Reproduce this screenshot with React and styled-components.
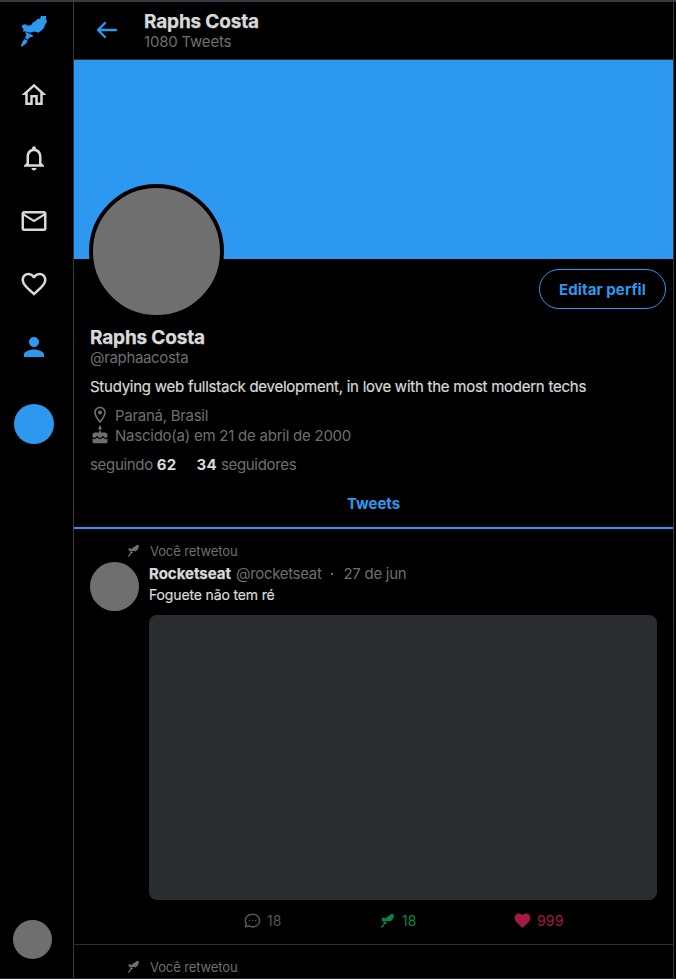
import React from 'react';
import styled, { createGlobalStyle } from 'styled-components';
import {
  MdOutlineHome,
  MdNotificationsNone,
  MdMailOutline,
  MdFavoriteBorder,
  MdFavorite,
  MdPerson,
  MdOutlineLocationOn,
  MdCake,
} from 'react-icons/md';
import { HiOutlineArrowLeft, HiOutlineChat } from 'react-icons/hi';

const c = {
  blue: '#2c98f0',
  white: '#d9d9d9',
  gray: '#6f6f6f',
  line: '#2c2e30',
  media: '#2a2d30',
  green: '#078646',
  red: '#a41b40',
};

const GlobalStyle = createGlobalStyle`
  * { box-sizing: border-box; margin: 0; padding: 0; }
  html, body { background: #000; overflow: hidden; }
  body { color: ${c.white}; font: 400 15px/20px "Inter", sans-serif; }
  svg { display: block; flex-shrink: 0; }
`;

const Page = styled.div`
  display: flex;
  height: 979px;
  overflow: hidden;
  border-top: 2px solid #373946;
  border-bottom: 1px solid #242628;
`;

const Sidebar = styled.nav`
  display: flex;
  flex-direction: column;
  justify-content: space-between;
  width: 74px;
  padding: 14px 0 19px 13px;
  border-right: 1px solid #36383a;
`;

const Menu = styled.div`
  display: flex;
  flex-direction: column;
  align-items: center;
  width: 42px;
`;

const Logo = styled.div`
  height: 32px;
  margin-bottom: 32px;
  color: ${c.blue};
`;

const MenuItem = styled.a`
  margin-bottom: 33px;
  color: ${(p) => (p.$active ? c.blue : c.white)};
  svg { width: 30px; height: 30px; }
`;

const TweetButton = styled.button`
  width: 40px;
  height: 40px;
  margin-top: 9px;
  border: 0;
  border-radius: 50%;
  background: ${c.blue};
`;

const UserPhoto = styled.div`
  width: 39px;
  height: 39px;
  border-radius: 50%;
  background: ${c.gray};
`;

const Main = styled.main`
  display: flex;
  flex-direction: column;
  width: 600px;
  border-right: 1px solid #36383a;
`;

const Header = styled.header`
  display: flex;
  flex: 0 0 58px;
  padding: 8px 0 0 21px;
  border-bottom: 1px solid ${c.line};
`;

const Back = styled.button`
  width: 24px;
  height: 24px;
  margin: 8px 25px 0 0;
  border: 0;
  background: none;
  color: ${c.blue};
  path { stroke-width: 2.3px; }
`;

const Name = styled.h1`
  font-size: 19px;
  font-weight: 700;
  line-height: 23px;
  letter-spacing: -0.17px;
  -webkit-text-stroke: 0.25px currentColor;
`;

const Muted = styled.span`
  display: block;
  color: ${c.gray};
  font-size: ${(p) => p.$size || 15}px;
  line-height: 18px;
  letter-spacing: ${(p) => p.$track ?? -0.2}px;
`;

const Banner = styled.div`
  position: relative;
  flex: 0 0 199px;
  background: ${c.blue};
`;

const Avatar = styled.div`
  position: absolute;
  left: 15px;
  top: 124px;
  width: 135px;
  height: 135px;
  border: 4px solid #000;
  border-radius: 50%;
  background: ${c.gray};
`;

const Profile = styled.section`
  display: flex;
  flex: 0 0 270px;
  flex-direction: column;
  padding: 10px 7px 0 16px;
  border-bottom: 2px solid ${c.blue};
`;

const EditButton = styled.button`
  align-self: flex-end;
  width: 127px;
  height: 40px;
  margin-bottom: 17px;
  padding-top: 2px;
  border: 1px solid ${c.blue};
  border-radius: 20px;
  background: none;
  color: ${c.blue};
  font: 700 15px/20px "Inter", sans-serif;
  letter-spacing: 0.1px;
`;

const Bio = styled.p`
  margin: 10px 0 8px;
  letter-spacing: -0.25px;
  -webkit-text-stroke: 0.2px currentColor;
`;

const Detail = styled.div`
  display: flex;
  align-items: center;
  gap: 5px;
  height: 20px;
  color: ${c.gray};
  svg { width: 20px; height: 20px; }
  ${Muted} { padding-top: 2px; }
`;

const Follows = styled.div`
  display: flex;
  gap: 20px;
  margin-top: 11px;
  color: ${c.gray};
  line-height: 18px;
  letter-spacing: -0.32px;
  strong { color: ${c.white}; font-weight: 700; letter-spacing: 0.3px; }
`;

const Tab = styled.div`
  margin-top: 18px;
  padding-right: 9px;
  color: ${c.blue};
  font-weight: 700;
  line-height: 24px;
  text-align: center;
  letter-spacing: -0.05px;
`;

const Tweet = styled.article`
  flex: 0 0 416px;
  padding: 14px 16px 0;
  border-bottom: 1px solid ${c.line};
`;

const Retweeted = styled.div`
  display: flex;
  gap: 11px;
  height: 18px;
  padding-left: 38px;
  color: ${c.gray};
  svg { margin-top: 2px; }
  ${Muted} { line-height: 17px; }
`;

const Body = styled.div`
  display: grid;
  grid-template-columns: 49px 508px;
  gap: 10px;
  margin-top: 1px;
`;

const Photo = styled.div`
  width: 49px;
  height: 49px;
  border-radius: 50%;
  background: ${c.gray};
`;

const Content = styled.div`
  display: flex;
  flex-direction: column;
`;

const Author = styled.div`
  display: flex;
  height: 23px;
  padding-top: 1px;
  align-items: center;
  gap: 6px;
  white-space: nowrap;
  strong {
    width: 81px;
    font-weight: 700;
    letter-spacing: -0.02px;
    -webkit-text-stroke: 0.25px currentColor;
  }
`;

const Dot = styled.i`
  width: 2px;
  height: 2px;
  margin: 0 4px;
  background: ${c.gray};
`;

const Text = styled.p`
  height: 20px;
  font-size: 14px;
  letter-spacing: -0.14px;
  -webkit-text-stroke: 0.2px currentColor;
`;

const Media = styled.div`
  height: 285px;
  margin-top: 10px;
  border-radius: 8px;
  background: ${c.media};
`;

const Actions = styled.div`
  display: grid;
  grid-template-columns: 138px 132px auto;
  margin-top: 11px;
  padding-left: 94px;
`;

const Action = styled.div`
  display: flex;
  align-items: center;
  gap: ${(p) => p.$gap || 5}px;
  height: 19px;
  color: ${(p) => p.$color};
  font-size: 14px;
  letter-spacing: 0.15px;
  svg.glyph { width: 19px; height: 19px; }
`;

function Rocket({ width, height }) {
  return (
    <svg width={width} height={height} viewBox="63 48 78 93" preserveAspectRatio="none" fill="currentColor">
      <path d="M123 48H139L138 56L141 65L135 74L132 84L125 91L116 98L108 95L99 95L90 98L80 95L68 94L71 88L65 81L68 74L76 73L84 77L94 75L98 68L107 63L112 57L120 56Z" />
      <path d="M76 95L86 100L100 107L97 111L89 112L83 119L75 114L79 106Z" />
      <path d="M73 117L83 122L79 130L65 141L63 136L67 127Z" />
    </svg>
  );
}

function TweetItem({ children }) {
  return (
    <Tweet>
      <Retweeted>
        <Rocket width={11} height={12} />
        <Muted $size={13} $track={-0.12}>Você retwetou</Muted>
      </Retweeted>
      <Body>
        <Photo />
        <Content>{children}</Content>
      </Body>
    </Tweet>
  );
}

export default function App() {
  return (
    <>
      <GlobalStyle />
      <Page>
        <Sidebar>
          <Menu>
            <Logo><Rocket width={26} height={31} /></Logo>
            <MenuItem><MdOutlineHome /></MenuItem>
            <MenuItem><MdNotificationsNone /></MenuItem>
            <MenuItem><MdMailOutline /></MenuItem>
            <MenuItem><MdFavoriteBorder /></MenuItem>
            <MenuItem $active><MdPerson /></MenuItem>
            <TweetButton />
          </Menu>
          <UserPhoto />
        </Sidebar>
        <Main>
          <Header>
            <Back><HiOutlineArrowLeft size={24} /></Back>
            <div>
              <Name>Raphs Costa</Name>
              <Muted $track={-0.2}>1080 Tweets</Muted>
            </div>
          </Header>
          <Banner><Avatar /></Banner>
          <Profile>
            <EditButton>Editar perfil</EditButton>
            <Name>Raphs Costa</Name>
            <Muted $track={-0.34}>@raphaacosta</Muted>
            <Bio>Studying web fullstack development, in love with the most modern techs</Bio>
            <Detail><MdOutlineLocationOn /><Muted $track={-0.28}>Paraná, Brasil</Muted></Detail>
            <Detail><MdCake /><Muted $track={-0.24}>Nascido(a) em 21 de abril de 2000</Muted></Detail>
            <Follows>
              <span>seguindo <strong>62</strong></span>
              <span><strong>34</strong> seguidores</span>
            </Follows>
            <Tab>Tweets</Tab>
          </Profile>
          <TweetItem>
            <Author>
              <strong>Rocketseat</strong>
              <Muted $track={-0.32}>@rocketseat</Muted>
              <Dot />
              <Muted $track={-0.28}>27 de jun</Muted>
            </Author>
            <Text>Foguete não tem ré</Text>
            <Media />
            <Actions>
              <Action $color="#555"><HiOutlineChat className="glyph" />18</Action>
              <Action $color={c.green} $gap={8}><Rocket width={13} height={14} />18</Action>
              <Action $color={c.red}><MdFavorite className="glyph" />999</Action>
            </Actions>
          </TweetItem>
          <TweetItem />
        </Main>
      </Page>
    </>
  );
}
